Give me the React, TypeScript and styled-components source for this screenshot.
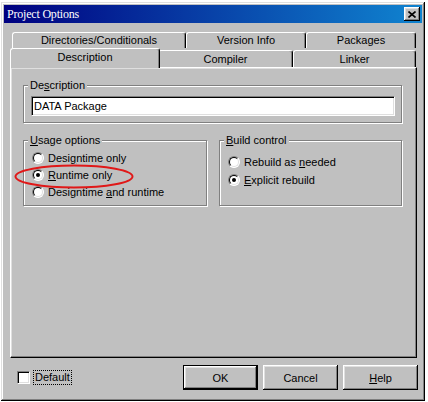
import React from "react";
import styled, { createGlobalStyle } from "styled-components";

const Global = createGlobalStyle`
  html, body { margin: 0; padding: 0; background: #ffffff; }
  body {
    width: 428px; height: 402px; overflow: hidden;
    font-family: "Liberation Sans", Arial, sans-serif;
    font-size: 11px; color: #000;
  }
`;

const Screen = styled.div`
  position: relative;
  box-sizing: border-box;
  width: 428px;
  height: 402px;
  padding: 2px 0 0 1px;
`;

const Window = styled.div`
  box-sizing: border-box;
  width: 424px;
  height: 399px;
  padding: 3px;
  background: #c0c0c0;
  box-shadow: inset -1px -1px #000, inset 1px 1px #dfdfdf,
    inset -2px -2px #808080, inset 2px 2px #fff;
  display: flex;
  flex-direction: column;
`;

const TitleBar = styled.div`
  height: 18px;
  flex: none;
  display: flex;
  align-items: center;
  padding: 0 2px 0 3px;
  background: linear-gradient(to right, #000080, #1084d0);
`;

const Title = styled.span`
  font-family: "Liberation Serif", "Times New Roman", serif;
  font-size: 12px;
  letter-spacing: -0.2px;
  color: #fff;
  line-height: 18px;
`;

const CloseButton = styled.div`
  margin-left: auto;
  box-sizing: border-box;
  width: 16px;
  height: 14px;
  background: #c0c0c0;
  box-shadow: inset -1px -1px #000, inset 1px 1px #fff,
    inset -2px -2px #808080, inset 2px 2px #dfdfdf;
  display: flex;
  align-items: center;
  justify-content: center;
`;

const Body = styled.div`
  flex: 1;
  min-height: 0;
  display: flex;
  flex-direction: column;
  padding: 7px 4px 0 6px;
`;

const TabStrip = styled.div`
  display: flex;
  flex-direction: column;
  padding: 0 2px;
`;

const TabRow = styled.div<{ $h: number }>`
  display: flex;
  align-items: flex-end;
  height: ${(p) => p.$h}px;
`;

const Tab = styled.div<{ $w: number; $h: number; $selected?: boolean }>`
  box-sizing: border-box;
  position: relative;
  z-index: ${(p) => (p.$selected ? 2 : 0)};
  width: ${(p) => (p.$selected ? p.$w + 4 : p.$w)}px;
  height: ${(p) => p.$h}px;
  margin: ${(p) => (p.$selected ? "0 -2px -1px -2px" : "0")};
  padding-bottom: ${(p) => (p.$selected ? 3 : 1)}px;
  background: #c0c0c0;
  border-top: 1px solid #fff;
  border-left: 1px solid #fff;
  border-right: 1px solid #000;
  border-radius: 3px 3px 0 0;
  box-shadow: inset -1px 0 #808080;
  display: flex;
  align-items: center;
  justify-content: center;
  white-space: nowrap;
`;

const Page = styled.div`
  position: relative;
  z-index: 1;
  flex: 1;
  min-height: 0;
  margin-right: 1px;
  border-top: 1px solid #fff;
  border-left: 1px solid #fff;
  border-right: 1px solid #000;
  border-bottom: 1px solid #000;
  box-shadow: inset -1px -1px #808080, inset 1px 1px #dfdfdf;
  padding: 11px 14px 0 12px;
  display: flex;
  flex-direction: column;
`;

const Group = styled.fieldset`
  margin: 0;
  padding: 0;
  min-width: 0;
  border: 1px solid #808080;
  box-shadow: inset 1px 1px #fff, 1px 1px #fff;
`;

const Legend = styled.legend`
  margin-left: 4px;
  padding: 0 2px;
  line-height: 13px;
  background: #c0c0c0;
  white-space: nowrap;
`;

const GroupInner = styled.div<{ $pad: string }>`
  padding: ${(p) => p.$pad};
`;

const Edit = styled.input`
  box-sizing: border-box;
  display: block;
  width: 100%;
  height: 20px;
  margin: 0;
  padding: 0 0 0 2px;
  border: 1px solid;
  border-color: #808080 #fff #fff #808080;
  box-shadow: inset 1px 1px #000, inset -1px -1px #dfdfdf;
  background: #fff;
  font: inherit;
  color: #000;
  outline: none;
`;

const GroupRow = styled.div`
  display: grid;
  grid-template-columns: 184px 1fr;
  column-gap: 12px;
  margin-top: 11px;
`;

const RadioList = styled.div<{ $top: number; $row: number }>`
  display: grid;
  grid-auto-rows: ${(p) => p.$row}px;
  padding: ${(p) => p.$top}px 0 5px 8px;
`;

const RadioRow = styled.label`
  display: flex;
  align-items: center;
  gap: 4px;
  white-space: nowrap;
`;

const RadioCircle = styled.span<{ $checked?: boolean }>`
  position: relative;
  box-sizing: border-box;
  flex: none;
  width: 12px;
  height: 12px;
  border-radius: 50%;
  border: 1px solid;
  border-color: #808080 #fff #fff #808080;
  background: #fff;
  &::before {
    content: "";
    position: absolute;
    inset: 0;
    border-radius: 50%;
    border: 1px solid;
    border-color: #000 #dfdfdf #dfdfdf #000;
  }
  &::after {
    content: "";
    display: ${(p) => (p.$checked ? "block" : "none")};
    position: absolute;
    left: 3px;
    top: 3px;
    width: 4px;
    height: 4px;
    border-radius: 50%;
    background: #000;
  }
`;

const U = styled.span`
  text-decoration: underline;
  text-underline-offset: 1px;
`;

const Footer = styled.div`
  flex: none;
  box-sizing: border-box;
  height: 40px;
  padding: 7px 0 8px 7px;
  display: flex;
  align-items: center;
`;

const CheckBox = styled.span`
  box-sizing: border-box;
  width: 13px;
  height: 13px;
  flex: none;
  border: 1px solid;
  border-color: #808080 #fff #fff #808080;
  box-shadow: inset 1px 1px #000, inset -1px -1px #dfdfdf;
  background: #fff;
`;

const FocusLabel = styled.span`
  margin-left: 4px;
  padding: 0 1px;
  line-height: 13px;
  outline: 1px dotted #000;
`;

const Buttons = styled.div`
  margin-left: auto;
  display: flex;
  gap: 5px;
`;

const Button = styled.div<{ $default?: boolean }>`
  box-sizing: border-box;
  width: 75px;
  height: 25px;
  background: #c0c0c0;
  border: ${(p) => (p.$default ? "1px solid #000" : "none")};
  box-shadow: inset -1px -1px #000, inset 1px 1px #fff,
    inset -2px -2px #808080, inset 2px 2px #dfdfdf;
  display: flex;
  align-items: center;
  justify-content: center;
`;

const Annotation = styled.svg`
  position: absolute;
  left: 14px;
  top: 164px;
  z-index: 5;
  pointer-events: none;
`;

const backTabs = [
  { label: "Directories/Conditionals", w: 174 },
  { label: "Version Info", w: 120 },
  { label: "Packages", w: 110 },
];

const frontTabs = [
  { label: "Description", w: 146, selected: true },
  { label: "Compiler", w: 135 },
  { label: "Linker", w: 123 },
];

export default function App() {
  return (
    <>
      <Global />
      <Screen>
        <Window>
          <TitleBar>
            <Title>Project Options</Title>
            <CloseButton aria-label="Close">
              <svg width="8" height="7" viewBox="0 0 8 7">
                <path d="M0.5 0.5 L7.5 6.5 M7.5 0.5 L0.5 6.5" stroke="#000" strokeWidth="1.6" fill="none" />
              </svg>
            </CloseButton>
          </TitleBar>
          <Body>
            <TabStrip>
              <TabRow $h={18}>
                {backTabs.map((t) => (
                  <Tab key={t.label} $w={t.w} $h={16}>
                    {t.label}
                  </Tab>
                ))}
              </TabRow>
              <TabRow $h={19}>
                {frontTabs.map((t) => (
                  <Tab key={t.label} $w={t.w} $h={t.selected ? 20 : 17} $selected={t.selected}>
                    {t.label}
                  </Tab>
                ))}
              </TabRow>
            </TabStrip>
            <Page>
              <Group>
                <Legend>
                  De<U>s</U>cription
                </Legend>
                <GroupInner $pad="4px 6px 6px 7px">
                  <Edit readOnly value="DATA Package" />
                </GroupInner>
              </Group>
              <GroupRow>
                <Group>
                  <Legend>
                    <U>U</U>sage options
                  </Legend>
                  <RadioList $top={2} $row={17}>
                    <RadioRow>
                      <RadioCircle />
                      <span>
                        Desi<U>g</U>ntime only
                      </span>
                    </RadioRow>
                    <RadioRow>
                      <RadioCircle $checked />
                      <span>
                        <U>R</U>untime only
                      </span>
                    </RadioRow>
                    <RadioRow>
                      <RadioCircle />
                      <span>
                        Designtime <U>a</U>nd runtime
                      </span>
                    </RadioRow>
                  </RadioList>
                </Group>
                <Group>
                  <Legend>
                    <U>B</U>uild control
                  </Legend>
                  <RadioList $top={6} $row={18}>
                    <RadioRow>
                      <RadioCircle />
                      <span>
                        Rebuild as <U>n</U>eeded
                      </span>
                    </RadioRow>
                    <RadioRow>
                      <RadioCircle $checked />
                      <span>
                        <U>E</U>xplicit rebuild
                      </span>
                    </RadioRow>
                  </RadioList>
                </Group>
              </GroupRow>
            </Page>
            <Footer>
              <CheckBox />
              <FocusLabel>Default</FocusLabel>
              <Buttons>
                <Button $default>OK</Button>
                <Button>Cancel</Button>
                <Button>
                  <span>
                    <U>H</U>elp
                  </span>
                </Button>
              </Buttons>
            </Footer>
          </Body>
        </Window>
        <Annotation width="121" height="25" viewBox="0 0 121 25">
          <ellipse cx="60" cy="12.5" rx="58.5" ry="11" fill="none" stroke="#e01818" strokeWidth="2" />
        </Annotation>
      </Screen>
    </>
  );
}
